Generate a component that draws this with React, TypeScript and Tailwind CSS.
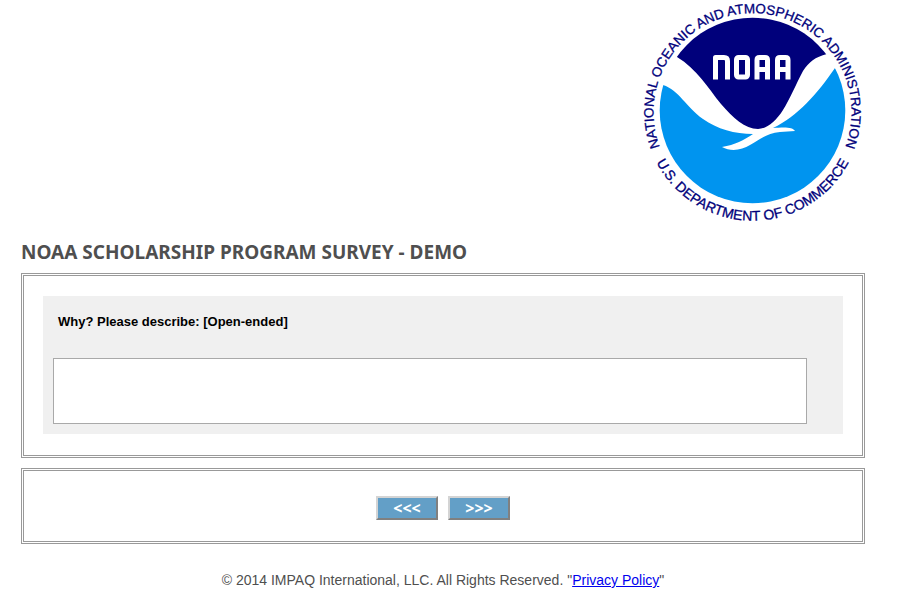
function NoaaLogo() {
  return (
    <svg viewBox="0 0 220 220" className="h-[220px] w-[220px] overflow-visible" role="img" aria-label="NOAA">
      <defs>
        <clipPath id="disc">
          <circle cx="109.5" cy="109.5" r="92.8" />
        </clipPath>
      </defs>

      <g clipPath="url(#disc)">
        {/* sky */}
        <path
          fill="#00007b"
          d="M34 56 L20 40 V0 H200 V40 L184 53 C172 56 166 61 160 70 C153 83 147 98 140 109 C133 120 124 128 115 128 C102 128 90 117 78 103 C65 87 54 68 34 56 Z"
        />
        {/* sea */}
        <path
          fill="#0094ef"
          d="M20 84 C36 89 43 106 60 118 C74 128 92 133 110 133 C101 139 92 144 79 146 C88 151 99 149 107 144 C119 137 125 132 137 131 L152 130 C150 126 142 126 130 127 C155 115 174 93 192 67 L220 90 V220 H0 V90 Z"
        />
      </g>

      {/* block lettering */}
      <g fill="none" stroke="#fff" strokeWidth="5" strokeLinejoin="round">
        <path d="M72.5 78.5 V56.5 H81 Q84.5 56.5 84.5 60 V78.5" />
        <rect x="93.5" y="56.5" width="11" height="19.5" rx="2" />
        <path d="M114 78.5 V59 Q114 56.5 116.5 56.5 H122 Q124.5 56.5 124.5 59 V78.5 M114 68.5 H124.5" />
        <path d="M134.5 78.5 V59 Q134.5 56.5 137 56.5 H142.5 Q145 56.5 145 59 V78.5 M134.5 68.5 H145" />
      </g>

      {/* lettering around the disc, drawn on a finer grid */}
      <svg width="220" height="220" viewBox="0 0 440 440" className="overflow-visible">
        <defs>
          <path id="ring-top" d="M34.4 294 A198 198 0 1 1 403.6 294" />
          <path id="ring-bottom" d="M13.5 292 A217 217 0 0 0 424.5 292" />
        </defs>
        <g
          fill="#00007b"
          stroke="#00007b"
          strokeWidth="0.6"
          textAnchor="middle"
          className="font-['Liberation_Sans',Arial,sans-serif]"
        >
          <text className="text-[27px]">
            <textPath href="#ring-top" startOffset="50%">
              NATIONAL OCEANIC AND ATMOSPHERIC ADMINISTRATION
            </textPath>
          </text>
          <text className="text-[28px]">
            <textPath href="#ring-bottom" startOffset="50%">
              U.S. DEPARTMENT OF COMMERCE
            </textPath>
          </text>
        </g>
      </svg>
    </svg>
  );
}

const navButton =
  "h-6 w-[62px] border-2 border-t-[#d4d4d4] border-l-[#d4d4d4] border-r-[#808080] border-b-[#808080] bg-[#639fc7] text-base leading-5 font-bold text-white font-['Open_Sans',sans-serif]";

export default function App() {
  return (
    <main className="bg-white pr-[38px] pb-4 pl-[21px] font-['Liberation_Sans',Arial,sans-serif]">
      <header>
        <div className="flex justify-end pt-px pr-0.5">
          <NoaaLogo />
        </div>
        <h1 className="mt-[19px] text-[19px] leading-6 font-bold text-[#4f4f4f] font-['Noto_Sans',Tahoma,sans-serif]">
          NOAA SCHOLARSHIP PROGRAM SURVEY - DEMO
        </h1>
      </header>

      <form onSubmit={(e) => e.preventDefault()}>
        <section className="mt-[9px] border-3 border-double border-[#999] px-[19px] pt-5 pb-[21px]">
          <div className="bg-[#f0f0f0] px-2.5 pt-4 pb-2.5">
            <label htmlFor="answer" className="block px-[5px] text-[13px] leading-5 font-bold text-black">
              Why? Please describe: [Open-ended]
            </label>
            <div className="mt-[26px] pr-[26px]">
              <textarea
                id="answer"
                className="block h-[66px] w-full resize-none border border-[#a9a9a9] bg-white p-1 text-[13px]"
              />
            </div>
          </div>
        </section>

        <section className="mt-2.5 flex justify-center gap-2.5 border-3 border-double border-[#999] pt-[25px] pb-[21px]">
          <button type="button" className={navButton}>{'<<<'}</button>
          <button type="submit" className={navButton}>{'>>>'}</button>
        </section>
      </form>

      <footer className="mt-[26px] text-center text-sm text-[#4f4f4f]">
        © 2014 IMPAQ International, LLC. All Rights Reserved. "<a href="#privacy" className="text-[#0000ee] underline">Privacy Policy</a>"
      </footer>
    </main>
  );
}
